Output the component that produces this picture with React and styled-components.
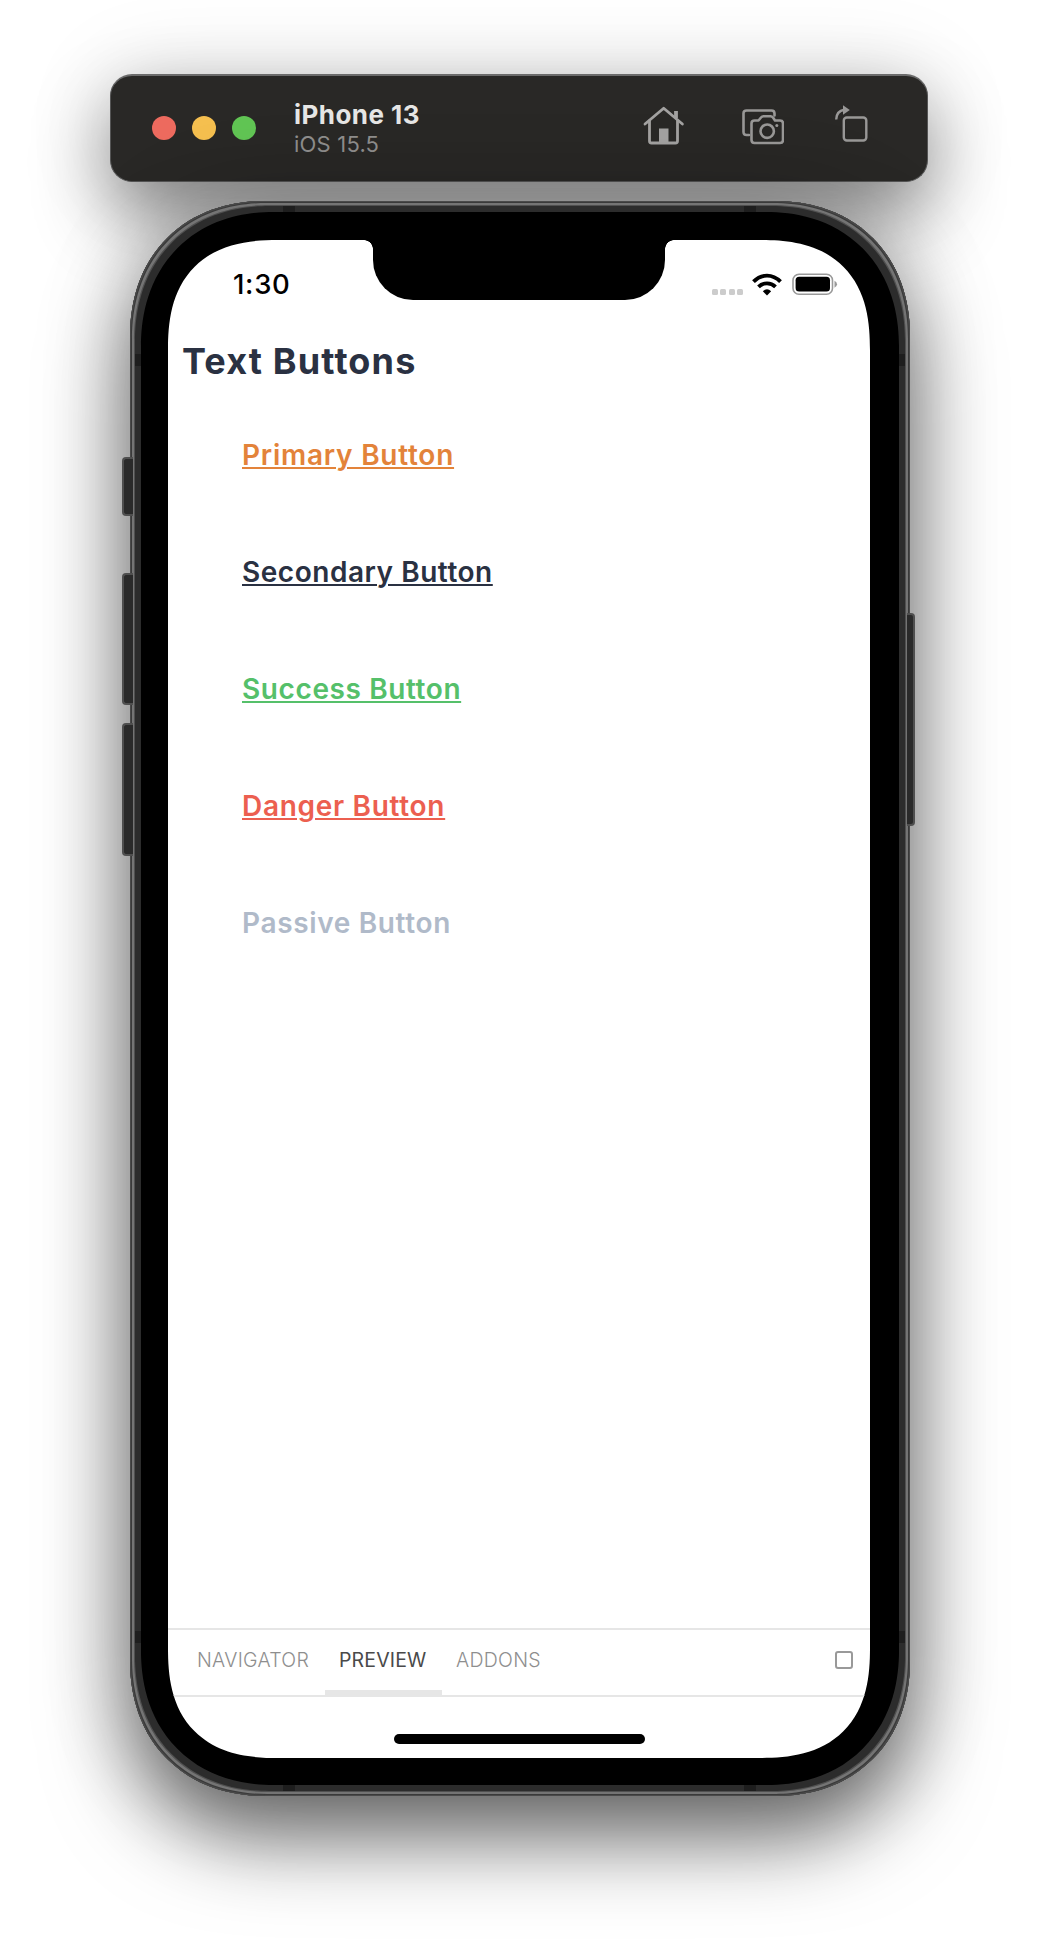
import React from 'react';
import styled, { createGlobalStyle } from 'styled-components';

const Global = createGlobalStyle`
  * { box-sizing: border-box; }
  html, body { margin: 0; background: #fff; }
`;

const ui = `Inter, "Liberation Sans", sans-serif`;

const Stage = styled.main`
  width: 1038px;
  height: 1946px;
  padding-top: 74px;
  overflow: hidden;
  display: flex;
  flex-direction: column;
  align-items: center;
  gap: 19px;
  background: #fff;
  font-family: ${ui};
`;

const TitleBar = styled.header`
  width: 818px;
  height: 108px;
  flex: none;
  display: flex;
  align-items: center;
  padding: 0 59px 2px 41px;
  border-radius: 22px;
  background: #292826;
  border: 1.5px solid #555;
  border-top: 2px solid #6b6b6b;
  box-shadow: 0 34px 76px rgba(0, 0, 0, 0.45), 0 0 90px rgba(0, 0, 0, 0.12);
`;

const Lights = styled.div`
  display: flex;
  gap: 16px;
`;

const Light = styled.span`
  width: 24px;
  height: 24px;
  border-radius: 50%;
  background: ${(p) => p.$color};
`;

const Device = styled.div`
  margin-left: 38px;
  padding-top: 2px;
  flex: 1;
`;

const DeviceName = styled.div`
  font-size: 26px;
  line-height: 30px;
  font-weight: 700;
  letter-spacing: 0.45px;
  color: #e6e6e5;
`;

const DeviceOs = styled.div`
  font-size: 22px;
  line-height: 28px;
  letter-spacing: 0.2px;
  color: #8f8e8d;
`;

const Tools = styled.div`
  display: flex;
  align-items: center;
`;

const Phone = styled.section`
  position: relative;
  width: 780px;
  height: 1595px;
  flex: none;
  margin-left: 2px;
  padding: 39px 40px 38px 38px;
  border-radius: 126px;
  background: #000;
  box-shadow: inset 0 0 0 1px #4a4a4a, inset 0 0 0 2px #3a3a3a, inset 0 0 0 4px #747474,
    inset 0 0 0 5px #505050, inset 0 0 0 11px #2c2c2c,
    0 42px 84px rgba(0, 0, 0, 0.56), 0 0 90px rgba(0, 0, 0, 0.2);
  @supports (corner-shape: superellipse(1.3)) {
    border-radius: 136px;
    corner-shape: superellipse(1.12);
  }
`;

const SideKey = styled.i`
  position: absolute;
  ${(p) => p.$side}: ${(p) => (p.$side === 'left' ? -8 : -5)}px;
  top: ${(p) => p.$top}px;
  width: ${(p) => (p.$side === 'left' ? 11 : 8)}px;
  height: ${(p) => p.$height}px;
  border: 2px solid #4f4f4f;
  border-${(p) => (p.$side === 'left' ? 'right' : 'left')}-width: 0;
  border-radius: ${(p) => (p.$side === 'left' ? '4px 0 0 4px' : '0 4px 4px 0')};
  background: #2a2a2a;
`;

const Band = styled.i`
  position: absolute;
  background: #1e1e1e;
  ${(p) => p.$edge}: 5px;
  ${(p) => (p.$edge === 'top' || p.$edge === 'bottom'
    ? `${p.$from}: ${p.$from === 'left' ? 153 : 154}px; width: 12px; height: 6px;`
    : `${p.$from}: 153px; width: 6px; height: 12px;`)}
`;

const Screen = styled.div`
  position: relative;
  width: 702px;
  height: 1518px;
  display: flex;
  flex-direction: column;
  overflow: hidden;
  background: #fff;
  border-radius: 88px;
  @supports (corner-shape: superellipse(1.5)) {
    border-radius: 110px;
    corner-shape: superellipse(1.32);
  }
`;

const Notch = styled.div`
  position: absolute;
  top: 0;
  left: 205px;
  width: 292px;
  height: 60px;
  background: #000;
  border-radius: 0 0 40px 40px;
  &::before,
  &::after {
    content: '';
    position: absolute;
    top: 0;
    width: 9px;
    height: 9px;
  }
  &::before {
    right: 100%;
    background: radial-gradient(circle at 0 100%, transparent 8.5px, #000 9px);
  }
  &::after {
    left: 100%;
    background: radial-gradient(circle at 100% 100%, transparent 8.5px, #000 9px);
  }
`;

const StatusBar = styled.div`
  height: 85px;
  flex: none;
  display: flex;
  justify-content: space-between;
  padding: 28px 32px 0 65px;
`;

const Clock = styled.time`
  font-size: 27.5px;
  line-height: 33px;
  font-weight: 500;
  letter-spacing: 0.7px;
  color: #000;
`;

const StatusIcons = styled.div`
  display: flex;
  align-items: flex-start;
  padding-top: 5px;
`;

const Content = styled.div`
  flex: 1;
`;

const Heading = styled.h1`
  margin: 14px 0 0 14px;
  font-size: 36px;
  line-height: 44px;
  font-weight: 700;
  letter-spacing: 1.15px;
  color: #2a3142;
`;

const ButtonList = styled.div`
  display: flex;
  flex-direction: column;
  align-items: flex-start;
  gap: 83px;
  margin: 55px 0 0 74px;
`;

const TextButton = styled.button`
  border: 0;
  padding: 0;
  background: none;
  font-family: ${ui};
  font-size: 28px;
  line-height: 34px;
  height: 34px;
  font-weight: 600;
  letter-spacing: ${(p) => p.$track}px;
  color: ${(p) => p.$color};
  text-decoration: ${(p) => (p.$plain ? 'none' : 'underline')};
  text-decoration-thickness: 2px;
  text-underline-offset: 2px;
`;

const TabBar = styled.nav`
  height: 69px;
  flex: none;
  display: flex;
  align-items: stretch;
  padding: 0 17px 0 15px;
  border-top: 2px solid #e6e6e6;
  border-bottom: 2px solid #e6e6e6;
`;

const Tab = styled.div`
  padding: 17px 14px 0 14px;
  width: ${(p) => p.$width}px;
  border-bottom: 5px solid ${(p) => (p.$active ? '#e6e6e6' : 'transparent')};
  font-size: 19.5px;
  line-height: 26px;
  font-weight: ${(p) => (p.$active ? 400 : 300)};
  letter-spacing: ${(p) => (p.$active ? 0.15 : 0.3)}px;
  white-space: nowrap;
  color: ${(p) => (p.$active ? '#4a4a4a' : '#8e8e8e')};
`;

const Toggle = styled.span`
  width: 18px;
  height: 18px;
  margin: 21px 0 0 auto;
  border: 2px solid #999;
  border-radius: 3px;
`;

const HomeArea = styled.footer`
  height: 61px;
  flex: none;
  display: flex;
  justify-content: center;
  padding-top: 37px;
`;

const HomeIndicator = styled.div`
  width: 251px;
  height: 10px;
  border-radius: 5px;
  background: #000;
`;

const HomeIcon = () => (
  <svg width="42" height="40" viewBox="0 0 42 40" fill="none" stroke="#a3a2a1" strokeWidth="2.8" strokeLinecap="round" strokeLinejoin="round">
    <path d="M2 18 20.700 2.200 39.400 18" />
    <path d="M6.500 15v20q0 2 2 2h24q2 0 2-2V15" />
    <path d="M33 5v7" strokeWidth="3.800" strokeLinecap="butt" />
    <path d="M16 22.500h9.500v14H16z" fill="#a3a2a1" stroke="none" />
  </svg>
);

const CameraIcon = () => (
  <svg width="42" height="36" viewBox="0 0 42 36" fill="none" stroke="#999897" strokeWidth="2.600" strokeLinecap="round" strokeLinejoin="round">
    <path d="M7 26H4.500q-3 0-3-3V4.500q0-3 3-3h25q3 0 3 3V6.500" />
    <path d="M9.500 14.500q0-3 3-3h4l2.500-3q1-1.200 2.500-1.200h7q1.500 0 2.500 1.200l2 3h5q3 0 3 3V31q0 3-3 3h-25.500q-3 0-3-3z" />
    <circle cx="25.200" cy="22.200" r="6.700" />
    <circle cx="34.800" cy="16.400" r="1.500" fill="#999897" stroke="none" />
  </svg>
);

const RotateIcon = () => (
  <svg width="33" height="38" viewBox="0 0 33 38" fill="none" stroke="#999897" strokeWidth="2.400">
    <rect x="8.800" y="12.500" width="22.500" height="23" rx="3" />
    <path d="M1.200 14.500q.3-8.500 8-9.700" />
    <path d="M8 .3v9.400l6.800-4.700z" fill="#999897" stroke="none" />
  </svg>
);

const Tool = styled.span`
  display: flex;
  margin-left: ${(p) => p.$gap || 0}px;
  margin-top: ${(p) => p.$shift || 0}px;
`;

const CellDots = styled.span`
  display: flex;
  gap: 2.5px;
  margin: 16px 9px 0 0;
  i {
    width: 6px;
    height: 6px;
    border-radius: 1.5px;
    background: #ccc;
  }
`;

const WifiIcon = () => (
  <svg width="30" height="23" viewBox="0 0 30 23" fill="none" stroke="#000" strokeWidth="3.900">
    <path d="M1.500 8.700Q7.500 2.600 15 2.600t13.500 6.100" />
    <path d="M6.500 13.800Q10 10.400 15 10.400t8.500 3.400" />
    <path d="M10.800 18.300Q15 14 19.200 18.300L15 22.500z" fill="#000" stroke="none" />
  </svg>
);

const Battery = () => (
  <svg width="46" height="23" viewBox="0 0 46 23">
    <rect x="1" y="1.200" width="39.500" height="20" rx="6" fill="none" stroke="#999" strokeWidth="1.600" />
    <rect x="3.600" y="3.800" width="34.400" height="14.800" rx="3.500" fill="#000" />
    <path d="M42.500 7.700q2.500 1 2.500 3.500t-2.500 3.500z" fill="#999" />
  </svg>
);

const buttons = [
  { label: 'Primary Button', color: '#e3833a', track: 0.75 },
  { label: 'Secondary Button', color: '#2a3142', track: 0.53 },
  { label: 'Success Button', color: '#55c06a', track: 0.6 },
  { label: 'Danger Button', color: '#ec5f50', track: 0.7 },
  { label: 'Passive Button', color: '#b0bac9', track: 0.65, plain: true },
];

const edges = [
  ['top', 'left'], ['top', 'right'], ['bottom', 'left'], ['bottom', 'right'],
  ['left', 'top'], ['left', 'bottom'], ['right', 'top'], ['right', 'bottom'],
];

export default function App() {
  return (
    <Stage>
      <Global />
      <TitleBar>
        <Lights>
          <Light $color="#ed6a5e" />
          <Light $color="#f5bf4f" />
          <Light $color="#61c554" />
        </Lights>
        <Device>
          <DeviceName>iPhone 13</DeviceName>
          <DeviceOs>iOS 15.5</DeviceOs>
        </Device>
        <Tools>
          <Tool $shift={-3}><HomeIcon /></Tool>
          <Tool $gap={57} $shift={-2}><CameraIcon /></Tool>
          <Tool $gap={51} $shift={-7}><RotateIcon /></Tool>
        </Tools>
      </TitleBar>
      <Phone>
        <SideKey $side="left" $top={256} $height={59} />
        <SideKey $side="left" $top={372} $height={132} />
        <SideKey $side="left" $top={522} $height={133} />
        <SideKey $side="right" $top={412} $height={213} />
        {edges.map(([edge, from]) => (
          <Band key={edge + from} $edge={edge} $from={from} />
        ))}
        <Screen>
          <Notch />
          <StatusBar>
            <Clock>1:30</Clock>
            <StatusIcons>
              <CellDots><i /><i /><i /><i /></CellDots>
              <WifiIcon />
              <Tool $gap={10}><Battery /></Tool>
            </StatusIcons>
          </StatusBar>
          <Content>
            <Heading>Text Buttons</Heading>
            <ButtonList>
              {buttons.map((b) => (
                <TextButton key={b.label} $color={b.color} $track={b.track} $plain={b.plain}>
                  {b.label}
                </TextButton>
              ))}
            </ButtonList>
          </Content>
          <TabBar>
            <Tab $width={142}>NAVIGATOR</Tab>
            <Tab $width={117} $active>PREVIEW</Tab>
            <Tab $width={116}>ADDONS</Tab>
            <Toggle />
          </TabBar>
          <HomeArea>
            <HomeIndicator />
          </HomeArea>
        </Screen>
      </Phone>
    </Stage>
  );
}
